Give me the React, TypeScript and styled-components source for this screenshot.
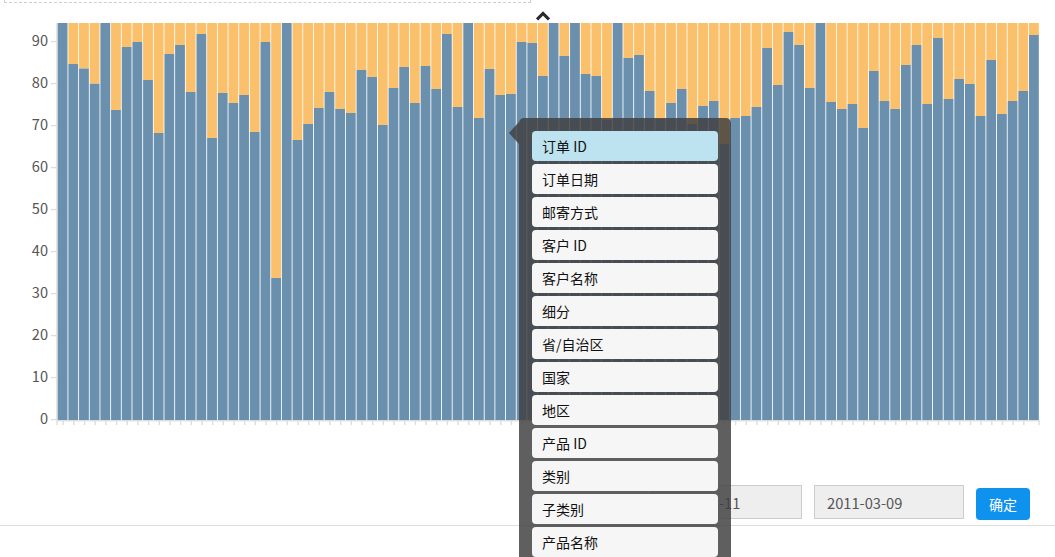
import React from "react";
import styled, { createGlobalStyle } from "styled-components";

const Global = createGlobalStyle`
  html, body { margin: 0; padding: 0; background: #fff; overflow: hidden; }
  #root { width: 1055px; height: 557px; overflow: hidden; }
`;

const Page = styled.div`
  position: relative;
  width: 1055px;
  height: 557px;
  overflow: hidden;
  display: flex;
  flex-direction: column;
  font-family: "Noto Sans CJK SC", sans-serif;
`;

const TopBar = styled.div`
  height: 23px;
  flex: none;
  display: flex;
  align-items: flex-start;
`;

const DashedBox = styled.div`
  width: 525px;
  height: 2px;
  margin-left: 4px;
  border: 1px dashed #cfcfcf;
  border-top: none;
`;

const Chevron = styled.svg`
  width: 14px;
  height: 10px;
  margin: 11px 0 0 4.5px;
  display: block;
`;

const ChartSvg = styled.svg`
  display: block;
  flex: none;
  width: 1055px;
  height: 412px;
`;

const AxisLabel = styled.text`
  font-family: "Noto Sans CJK SC", sans-serif;
  font-size: 14.6px;
  fill: #555555;
  text-anchor: end;
`;

const Controls = styled.div`
  flex: none;
  display: flex;
  align-items: flex-start;
  justify-content: flex-end;
  gap: 12px;
  height: 40px;
  margin-top: 50px;
  padding-right: 25px;
`;

const DateField = styled.div`
  box-sizing: border-box;
  width: 150px;
  height: 34px;
  padding-left: 12px;
  display: flex;
  align-items: center;
  background: #eeeeee;
  border: 1px solid #cccccc;
  color: #555555;
  font-size: 14.7px;
`;

const ConfirmButton = styled.button`
  width: 54px;
  height: 32px;
  margin-top: 3px;
  padding: 0;
  border: none;
  border-radius: 4px;
  background: #0f91ee;
  color: #fff;
  font-family: "Noto Sans CJK SC", sans-serif;
  font-size: 14px;
`;

const Footer = styled.div`
  flex: 1;
  border-top: 1px solid #dddddd;
`;

const Popover = styled.div`
  position: absolute;
  left: 519px;
  top: 118px;
  width: 212px;
  height: 460px;
  box-sizing: border-box;
  padding: 13px 13px 0;
  display: flex;
  flex-direction: column;
  gap: 3px;
  background: rgba(64, 64, 64, 0.84);
  border-radius: 5px;

  &::before {
    content: "";
    position: absolute;
    left: -10px;
    top: 4px;
    border-style: solid;
    border-width: 11px 10px 11px 0;
    border-color: transparent rgba(64, 64, 64, 0.84) transparent transparent;
  }
`;

const FieldItem = styled.div<{ $active?: boolean }>`
  flex: none;
  height: 30px;
  padding-left: 10px;
  display: flex;
  align-items: center;
  border-radius: 4px;
  background: ${(p) => (p.$active ? "#bde3f0" : "#f6f6f6")};
  color: #111111;
  font-family: "Noto Sans CJK SC", sans-serif;
  font-size: 14px;
`;

const tops = [
  23, 64, 68.5, 83.7, 23, 110, 47, 42, 80, 133, 54, 45, 92, 34, 138, 93, 103, 95, 132, 42, 278, 23, 140,
  124, 108, 92, 109, 113, 70, 77, 125, 88, 67, 103, 66, 89, 34, 107, 23, 118, 69, 95, 94, 42, 43, 76, 23,
  56, 23, 74, 76, 120, 23, 58, 55, 91, 119, 103, 89, 124, 106, 101, 144, 118, 116, 107, 48, 85, 32, 45,
  88, 23, 102, 109, 104, 128, 71, 101, 109, 65, 45, 104, 38, 99, 79, 84, 116, 60, 114, 101, 91, 35,
];

const fields = [
  "订单 ID", "订单日期", "邮寄方式", "客户 ID", "客户名称", "细分", "省/自治区",
  "国家", "地区", "产品 ID", "类别", "子类别", "产品名称",
];

const OFFSET = 23;
const PITCH = 982 / 92;
const BLUE = "#6a90ae";
const ORANGE = "#fbc06b";
const TICK = "#dedede";

export default function App() {
  const yTicks = [0, 10, 20, 30, 40, 50, 60, 70, 80, 90];
  return (
    <Page>
      <Global />
      <TopBar>
        <DashedBox />
        <Chevron viewBox="0 0 14 10">
          <path d="M1 8.4 L7 2.4 L13 8.4" fill="none" stroke="#2b2b2b" strokeWidth="3.2" />
        </Chevron>
      </TopBar>
      <ChartSvg viewBox="0 0 1055 412">
        <rect x="56.2" y="0" width="1.4" height="397" fill={TICK} />
        {yTicks.map((v) => {
          const y = 396.6 - v * 4.2;
          return (
            <g key={v}>
              <rect x="51" y={y - 0.7} width="6" height="1.4" fill={TICK} />
              <AxisLabel x="48" y={y + 4.3}>{v}</AxisLabel>
            </g>
          );
        })}
        {tops.map((t, i) => {
          const x = 57.7 + i * PITCH;
          const top = t - OFFSET;
          return (
            <g key={i}>
              <rect x={x} y="0" width="9.8" height={top} fill={ORANGE} />
              <rect x={x} y={top} width="9.8" height={397 - top} fill={BLUE} />
              {i < 91 && (
                <rect x={52 + PITCH + i * PITCH - 0.2} y="397" width="1.4" height="5" fill={TICK} />
              )}
            </g>
          );
        })}
        <rect x="57" y="397" width="983" height="1.4" fill={TICK} />
        <rect x="56.4" y="397" width="1.4" height="5" fill={TICK} />
        <rect x="1038.4" y="397" width="1.4" height="5" fill={TICK} />
      </ChartSvg>
      <Controls>
        <DateField>2010-01-11</DateField>
        <DateField>2011-03-09</DateField>
        <ConfirmButton>确定</ConfirmButton>
      </Controls>
      <Footer />
      <Popover>
        {fields.map((f, i) => (
          <FieldItem key={f} $active={i === 0}>{f}</FieldItem>
        ))}
      </Popover>
    </Page>
  );
}
